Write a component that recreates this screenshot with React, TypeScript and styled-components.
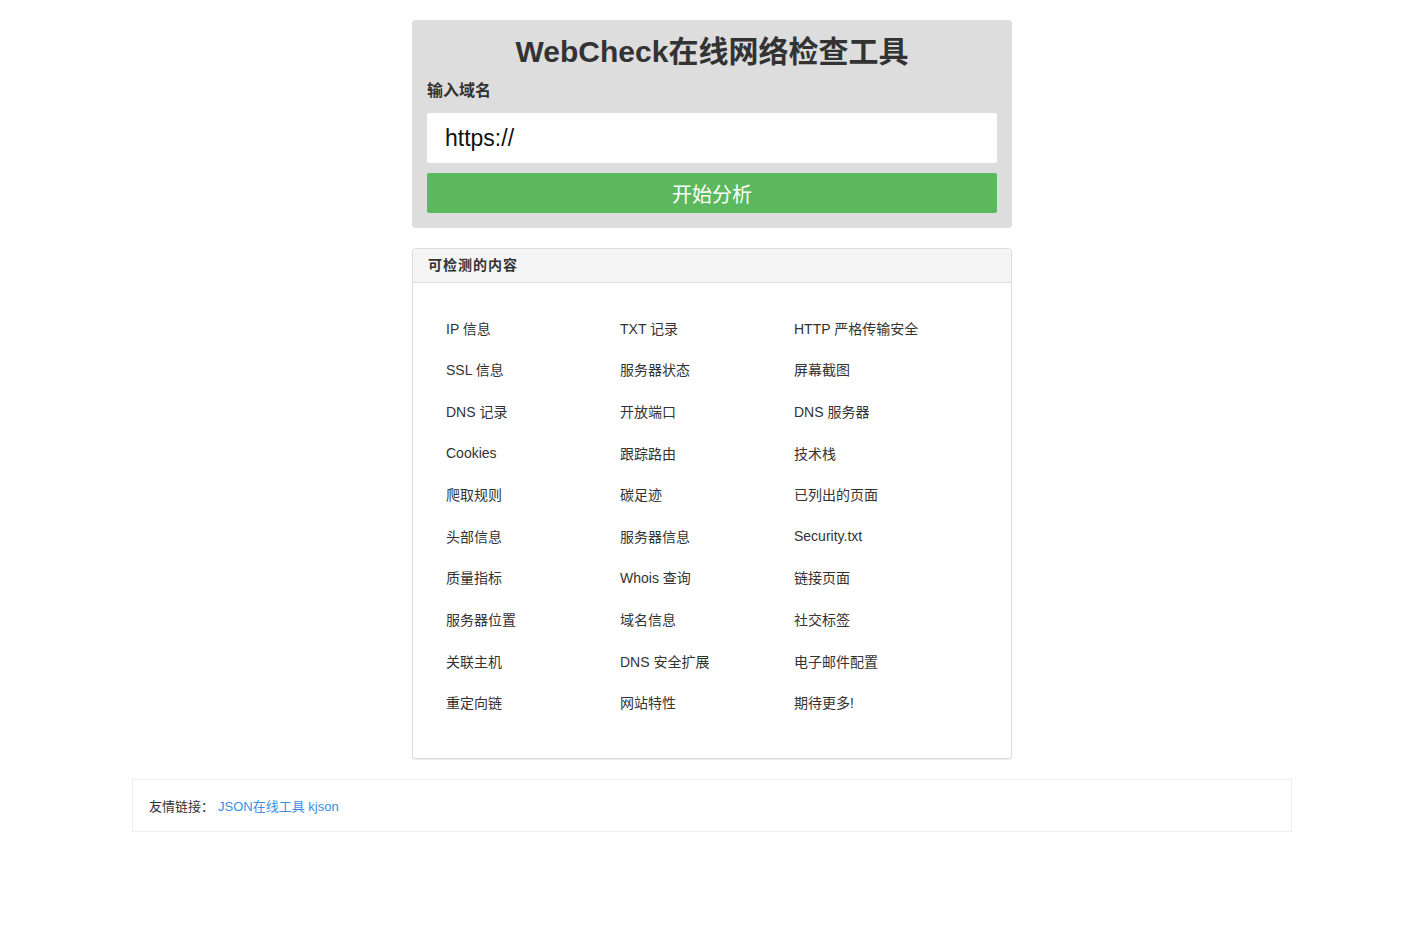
import React from 'react'
import styled, { createGlobalStyle } from 'styled-components'

const GlobalStyle = createGlobalStyle`
	* {
		box-sizing: border-box;
	}

	body {
		margin: 0;
		background: #fff;
		color: #333;
		font-family: 'Liberation Sans', 'Noto Sans CJK SC', sans-serif;
		font-size: 14px;
	}
`

const features = [
	'IP 信息', 'TXT 记录', 'HTTP 严格传输安全',
	'SSL 信息', '服务器状态', '屏幕截图',
	'DNS 记录', '开放端口', 'DNS 服务器',
	'Cookies', '跟踪路由', '技术栈',
	'爬取规则', '碳足迹', '已列出的页面',
	'头部信息', '服务器信息', 'Security.txt',
	'质量指标', 'Whois 查询', '链接页面',
	'服务器位置', '域名信息', '社交标签',
	'关联主机', 'DNS 安全扩展', '电子邮件配置',
	'重定向链', '网站特性', '期待更多!',
]

const App = () => {
	return (
		<>
			<GlobalStyle />
			<Page>
				<SearchBox>
					<Title>WebCheck在线网络检查工具</Title>
					<Label htmlFor="domain">输入域名</Label>
					<UrlInput id="domain" type="text" defaultValue="https://" />
					<StartBtn type="button">开始分析</StartBtn>
				</SearchBox>

				<Panel>
					<PanelHeading>可检测的内容</PanelHeading>
					<FeatureGrid>
						{features.map(item => (
							<FeatureItem key={item}>{item}</FeatureItem>
						))}
					</FeatureGrid>
				</Panel>
			</Page>

			<Footer>
				友情链接：<FooterLink href="#">JSON在线工具 kjson</FooterLink>
			</Footer>
		</>
	)
}

export default App

const Page = styled.main`
	width: 600px;
	margin: 20px auto 0;
`

const SearchBox = styled.section`
	display: flex;
	flex-direction: column;
	background-color: #ddd;
	border-radius: 4px;
	padding: 15px;
`

const Title = styled.h1`
	margin: 0;
	font-size: 30px;
	line-height: 34px;
	font-weight: 700;
	text-align: center;
	color: #333;
`

const Label = styled.label`
	margin-top: 12px;
	font-size: 16px;
	line-height: 20px;
	font-weight: 700;
	color: #333;
`

const UrlInput = styled.input`
	margin-top: 12px;
	height: 50px;
	border: 0;
	border-radius: 2px;
	padding: 0 18px;
	font-family: 'Liberation Sans', 'Noto Sans CJK SC', sans-serif;
	font-size: 23px;
	color: #111;
	background: #fff;
	outline: none;
`

const StartBtn = styled.button`
	margin-top: 10px;
	height: 40px;
	border: 0;
	border-radius: 2px;
	background-color: #5cb85c;
	color: #fff;
	font-family: 'Liberation Sans', 'Noto Sans CJK SC', sans-serif;
	font-size: 20px;
	cursor: pointer;
`

const Panel = styled.section`
	margin-top: 20px;
	background: #fff;
	border: 1px solid #ddd;
	border-radius: 4px;
	box-shadow: 0 1px 1px rgba(0, 0, 0, 0.08);
`

const PanelHeading = styled.div`
	height: 34px;
	padding: 0 15px 4px;
	display: flex;
	align-items: center;
	background-color: #f5f5f5;
	border-bottom: 1px solid #ddd;
	border-radius: 3px 3px 0 0;
	font-size: 14px;
	font-weight: 700;
	letter-spacing: 1px;
	color: #333;
`

const FeatureGrid = styled.ul`
	list-style: none;
	margin: 0;
	padding: 24px 33px 35px;
	display: grid;
	grid-template-columns: repeat(3, 174px);
	grid-auto-rows: 41.6px;
`

const FeatureItem = styled.li`
	display: flex;
	align-items: center;
	font-size: 14px;
	color: #333;
`

const Footer = styled.footer`
	width: 1160px;
	margin: 20px auto 0;
	height: 53px;
	padding: 0 16px;
	display: flex;
	align-items: center;
	border: 1px solid #eee;
	font-size: 13px;
	color: #333;
`

const FooterLink = styled.a`
	margin-left: 4px;
	color: #3a8ee6;
	text-decoration: none;
`
